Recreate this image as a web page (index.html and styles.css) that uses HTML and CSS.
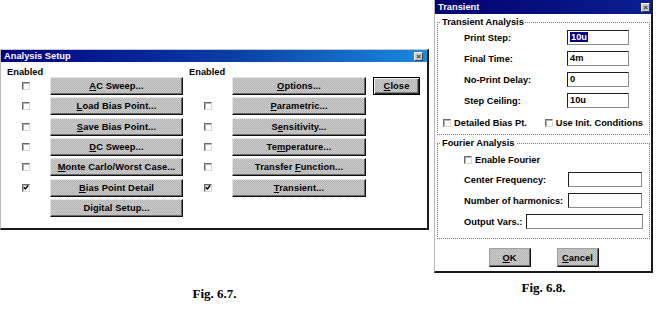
FILE: index.html
```html
<!DOCTYPE html>
<html lang="en">

<head>
  <meta charset="UTF-8">
  <meta name="viewport" content="width=device-width, initial-scale=1.0">
  <title>Analysis Setup / Transient</title>
  <link rel="stylesheet" href="styles.css">
</head>

<body>
  <div class="page">
    <div class="figure figure--setup">
      <div class="dialog dialog--setup">
        <div class="titlebar titlebar--fade">
          <span class="titlebar__text">Analysis Setup</span>
          <span class="titlebar__close">&times;</span>
        </div>
        <div class="setup">
          <div class="setup__col setup__col--check">
            <div class="setup__head">Enabled</div>
            <div class="cell"><span class="check"></span></div>
            <div class="cell"><span class="check"></span></div>
            <div class="cell"><span class="check"></span></div>
            <div class="cell"><span class="check"></span></div>
            <div class="cell"><span class="check"></span></div>
            <div class="cell"><span class="check"><svg viewBox="0 0 7 7" width="7" height="7"><path d="M1 3.2 L2.8 5.2 L6 1.2" /></svg></span></div>
          </div>
          <div class="setup__col setup__col--btn">
            <div class="setup__head"></div>
            <button class="btn"><u>A</u>C Sweep...</button>
            <button class="btn"><u>L</u>oad Bias Point...</button>
            <button class="btn"><u>S</u>ave Bias Point...</button>
            <button class="btn"><u>D</u>C Sweep...</button>
            <button class="btn"><u>M</u>onte Carlo/Worst Case...</button>
            <button class="btn"><u>B</u>ias Point Detail</button>
            <button class="btn">Digital Setup...</button>
          </div>
          <div class="setup__col setup__col--check">
            <div class="setup__head">Enabled</div>
            <div class="cell"></div>
            <div class="cell"><span class="check"></span></div>
            <div class="cell"><span class="check"></span></div>
            <div class="cell"><span class="check"></span></div>
            <div class="cell"><span class="check"></span></div>
            <div class="cell"><span class="check"><svg viewBox="0 0 7 7" width="7" height="7"><path d="M1 3.2 L2.8 5.2 L6 1.2" /></svg></span></div>
          </div>
          <div class="setup__col setup__col--btn2">
            <div class="setup__head"></div>
            <button class="btn"><u>O</u>ptions...</button>
            <button class="btn"><u>P</u>arametric...</button>
            <button class="btn">S<u>e</u>nsitivity...</button>
            <button class="btn">Te<u>m</u>perature...</button>
            <button class="btn">Transfer <u>F</u>unction...</button>
            <button class="btn"><u>T</u>ransient...</button>
          </div>
          <div class="setup__col setup__col--side">
            <div class="setup__head"></div>
            <button class="btn btn--default"><u>C</u>lose</button>
          </div>
        </div>
      </div>
      <div class="caption">Fig. 6.7.</div>
    </div>

    <div class="figure figure--transient">
      <div class="dialog dialog--transient">
        <div class="titlebar titlebar--dark">
          <span class="titlebar__text">Transient</span>
          <span class="titlebar__close">&times;</span>
        </div>
        <div class="transient">
          <fieldset class="group group--analysis">
            <legend class="group__title">Transient Analysis</legend>
            <div class="group__rows">
              <div class="field">
                <span class="field__label">Print Step:</span>
                <span class="field__input"><span class="sel">10u</span></span>
              </div>
              <div class="field">
                <span class="field__label">Final Time:</span>
                <span class="field__input">4m</span>
              </div>
              <div class="field">
                <span class="field__label">No-Print Delay:</span>
                <span class="field__input">0</span>
              </div>
              <div class="field">
                <span class="field__label">Step Ceiling:</span>
                <span class="field__input">10u</span>
              </div>
            </div>
            <div class="options">
              <label class="option option--wide"><span class="check"></span>Detailed Bias Pt.</label>
              <label class="option"><span class="check"></span>Use Init. Conditions</label>
            </div>
          </fieldset>
          <fieldset class="group group--fourier">
            <legend class="group__title">Fourier Analysis</legend>
            <label class="option option--indent"><span class="check"></span>Enable Fourier</label>
            <div class="group__rows group__rows--fourier">
              <div class="field field--wide">
                <span class="field__label">Center Frequency:</span>
                <span class="field__input"></span>
              </div>
              <div class="field field--wide">
                <span class="field__label">Number of harmonics:</span>
                <span class="field__input"></span>
              </div>
              <div class="field field--fill">
                <span class="field__label">Output Vars.:</span>
                <span class="field__input"></span>
              </div>
            </div>
          </fieldset>
          <div class="actions">
            <button class="btn btn--action"><u>O</u>K</button>
            <button class="btn btn--action"><u>C</u>ancel</button>
          </div>
        </div>
      </div>
      <div class="caption caption--right">Fig. 6.8.</div>
    </div>
  </div>
</body>

</html>
```

FILE: styles.css
```css
body {
  background-color: #fff;
  color: #000;
  font-family: "Liberation Sans", Arial, sans-serif;
  font-size: 9.3px;
  font-weight: bold;
  margin: 0;
}

.page {
  align-items: flex-start;
  display: flex;
  height: 310px;
  overflow: hidden;
  width: 657px;
}

.figure--setup {
  padding-top: 49px;
  width: 434px;
}

.figure--transient {
  width: 219px;
}

.dialog {
  background-color: #fff;
  border-bottom: 2px solid #1a1a1a;
  border-left: 1px solid #b8b8b8;
  border-right: 2px solid #1a1a1a;
  box-sizing: border-box;
}

.dialog--setup {
  border-top: 1px solid #c8c8c8;
  height: 181px;
  width: 429px;
}

.dialog--transient {
  height: 273px;
  width: 219px;
}

.titlebar {
  align-items: center;
  color: #fff;
  display: flex;
  height: 12px;
  justify-content: space-between;
  padding: 0 4px 0 3px;
}

.titlebar--fade {
  background: linear-gradient(to right, #000080 0%, #0a3fa8 55%, #1a8ae0 100%);
}

.titlebar--dark {
  background: linear-gradient(to right, #00006e, #0a1f90);
  height: 14px;
  padding-right: 1px;
}

.titlebar__close {
  background-color: #c8c8c8;
  border: 1px solid;
  border-color: #fff #404040 #404040 #fff;
  color: #333;
  font-size: 8px;
  height: 7px;
  line-height: 7px;
  text-align: center;
  width: 7px;
}

/* Analysis Setup */

.setup {
  display: flex;
}

.setup__col {
  display: flex;
  flex-direction: column;
  gap: 2.33px;
}

.setup__col--check {
  align-items: center;
  width: 49px;
}

.setup__col--btn {
  width: 133px;
}

.setup__col--btn2 {
  width: 134px;
}

.setup__col--side {
  margin-left: 7px;
  width: 47px;
}

.setup__head {
  align-self: stretch;
  box-sizing: border-box;
  height: 12.67px;
  line-height: 11px;
  padding: 5px 0 0 6px;
  white-space: nowrap;
}

.cell {
  align-items: center;
  display: flex;
  height: 18px;
}

.check {
  align-items: center;
  background-color: #fff;
  border-bottom: 1px solid #d8d8d8;
  border-left: 1px solid #6a6a6a;
  border-right: 1px solid #d8d8d8;
  border-top: 1px solid #6a6a6a;
  box-shadow: inset 1px 1px #b4b4b4;
  box-sizing: border-box;
  display: inline-flex;
  flex: none;
  height: 8px;
  justify-content: center;
  width: 8px;
}

.check svg {
  fill: none;
  stroke: #000;
  stroke-width: 1.6;
}

.btn {
  appearance: none;
  background: repeating-conic-gradient(#b2b2b2 0 25%, #cecece 0 50%) 0 0 / 2px 2px;
  border: 1px solid;
  border-color: #e4e4e4 #111 #111 #e4e4e4;
  box-shadow: inset -1px -1px #6a6a6a;
  box-sizing: border-box;
  color: #000;
  font: inherit;
  height: 18px;
  letter-spacing: .1px;
  padding: 0;
  white-space: nowrap;
}

.btn--default {
  border-color: #000;
  box-shadow: inset 1px 1px #eee, inset -1px -1px #2a2a2a, inset -2px -2px #7a7a7a;
}

.btn--action {
  border-color: #a0a0a0 #111 #111 #a0a0a0;
  height: 19px;
  width: 42px;
}

/* Transient */

.transient {
  padding: 2px 1px 0 2px;
}

.group {
  border: 1px dotted #7a7a7a;
  margin: 0;
  min-width: 0;
  padding: 2px 6px 5px 0;
}

.group--fourier {
  margin-top: 2px;
  padding-bottom: 9px;
  padding-top: 5px;
}

.group__title {
  line-height: 12px;
  margin-left: 3px;
  padding: 0 1px;
}

.group__rows {
  display: flex;
  flex-direction: column;
  gap: 6px;
}

.group__rows--fourier {
  margin-top: 6px;
}

.field {
  align-items: center;
  display: flex;
  height: 15px;
  padding-left: 26px;
}

.field__label {
  flex: none;
  width: 103px;
}

.field__input {
  background-color: #fff;
  border: 1px solid;
  border-color: #1e1e1e #8a8a8a #8a8a8a #1e1e1e;
  box-sizing: border-box;
  height: 15px;
  line-height: 13px;
  padding-left: 2px;
  width: 62px;
}

.field--wide .field__label {
  width: 104px;
}

.field--wide .field__input {
  width: 74px;
}

.field--fill .field__label {
  width: auto;
}

.field--fill .field__input {
  flex: 1;
  margin-left: 4px;
  width: auto;
}

.sel {
  background-color: #000080;
  color: #fff;
  padding: 0 1px;
}

.options {
  display: flex;
  margin-top: 9px;
  padding-left: 5px;
}

.option {
  align-items: center;
  display: flex;
  gap: 3px;
  height: 12px;
  white-space: nowrap;
}

.option--wide {
  width: 102px;
}

.option--indent {
  padding-left: 26px;
}

.actions {
  display: flex;
  gap: 26px;
  justify-content: center;
  margin-top: 9px;
}

.caption {
  font-family: "Liberation Serif", "Times New Roman", serif;
  font-size: 13px;
  line-height: 16px;
  margin-top: 56px;
  text-align: center;
  width: 429px;
}

.caption--right {
  margin-top: 7px;
  width: 219px;
}
```
